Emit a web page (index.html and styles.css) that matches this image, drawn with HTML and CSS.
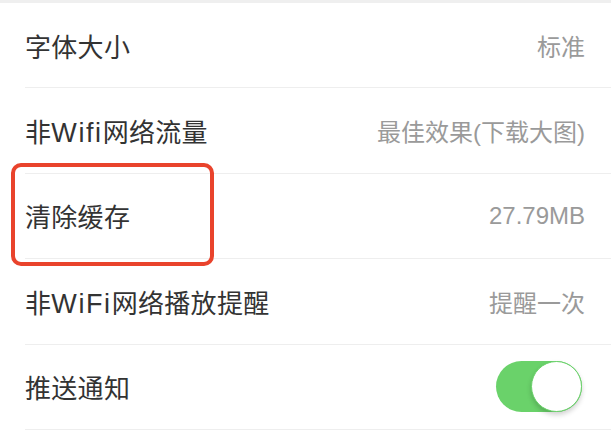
FILE: index.html
```html
<!DOCTYPE html>
<html lang="zh-CN">
<head>
<meta charset="utf-8">
<title>设置</title>
<link rel="stylesheet" href="styles.css">
</head>
<body>
<div class="page">
  <div class="topband"></div>
  <ul class="list">
    <li class="row"><span class="label">字体大小</span><span class="value">标准</span></li>
    <li class="row"><span class="label">非<span class="latin">Wifi</span>网络流量</span><span class="value">最佳效果(下载大图)</span></li>
    <li class="row"><span class="label">清除缓存</span><span class="value">27.79MB</span><div class="highlight"></div></li>
    <li class="row"><span class="label">非<span class="latin">WiFi</span>网络播放提醒</span><span class="value">提醒一次</span></li>
    <li class="row"><span class="label">推送通知</span><span class="toggle on"><span class="knob"></span></span></li>
  </ul>
</div>
</body>
</html>
```
FILE: styles.css
```css
html, body {
  margin: 0;
  padding: 0;
  background: #ffffff;
}
body {
  font-family: "Liberation Sans", "Noto Sans CJK SC", sans-serif;
  width: 616px;
  height: 436px;
  overflow: hidden;
}
.page {
  width: 611px;
}
.topband {
  height: 3px;
  background: #efefef;
}
.list {
  list-style: none;
  margin: 0;
  padding: 0 0 0 25px;
}
.row {
  position: relative;
  height: 85.4px;
  box-sizing: border-box;
  display: flex;
  align-items: center;
  justify-content: space-between;
  padding-right: 26px;
  border-bottom: 1.5px solid #eeeeee;
}
.label {
  font-size: 26px;
  color: #333333;
  letter-spacing: 0.3px;
}
.latin {
  font-size: 27px;
  letter-spacing: 1.6px;
}
.value {
  font-size: 24px;
  color: #9a9a9a;
}
.highlight {
  position: absolute;
  left: -14px;
  top: -11px;
  width: 203px;
  height: 103px;
  box-sizing: border-box;
  border: 4px solid #e9432c;
  border-radius: 10px;
  pointer-events: none;
}
.toggle {
  width: 86px;
  height: 51px;
  border-radius: 26px;
  background: #6ad26a;
  position: relative;
  margin-right: 3px;
  flex: none;
}
.knob {
  position: absolute;
  right: 0;
  top: 0;
  width: 51px;
  height: 51px;
  box-sizing: border-box;
  border-radius: 50%;
  background: #ffffff;
  border: 1.5px solid #6ad26a;
  box-shadow: 0 3px 5px rgba(0, 0, 0, 0.18);
}
```
